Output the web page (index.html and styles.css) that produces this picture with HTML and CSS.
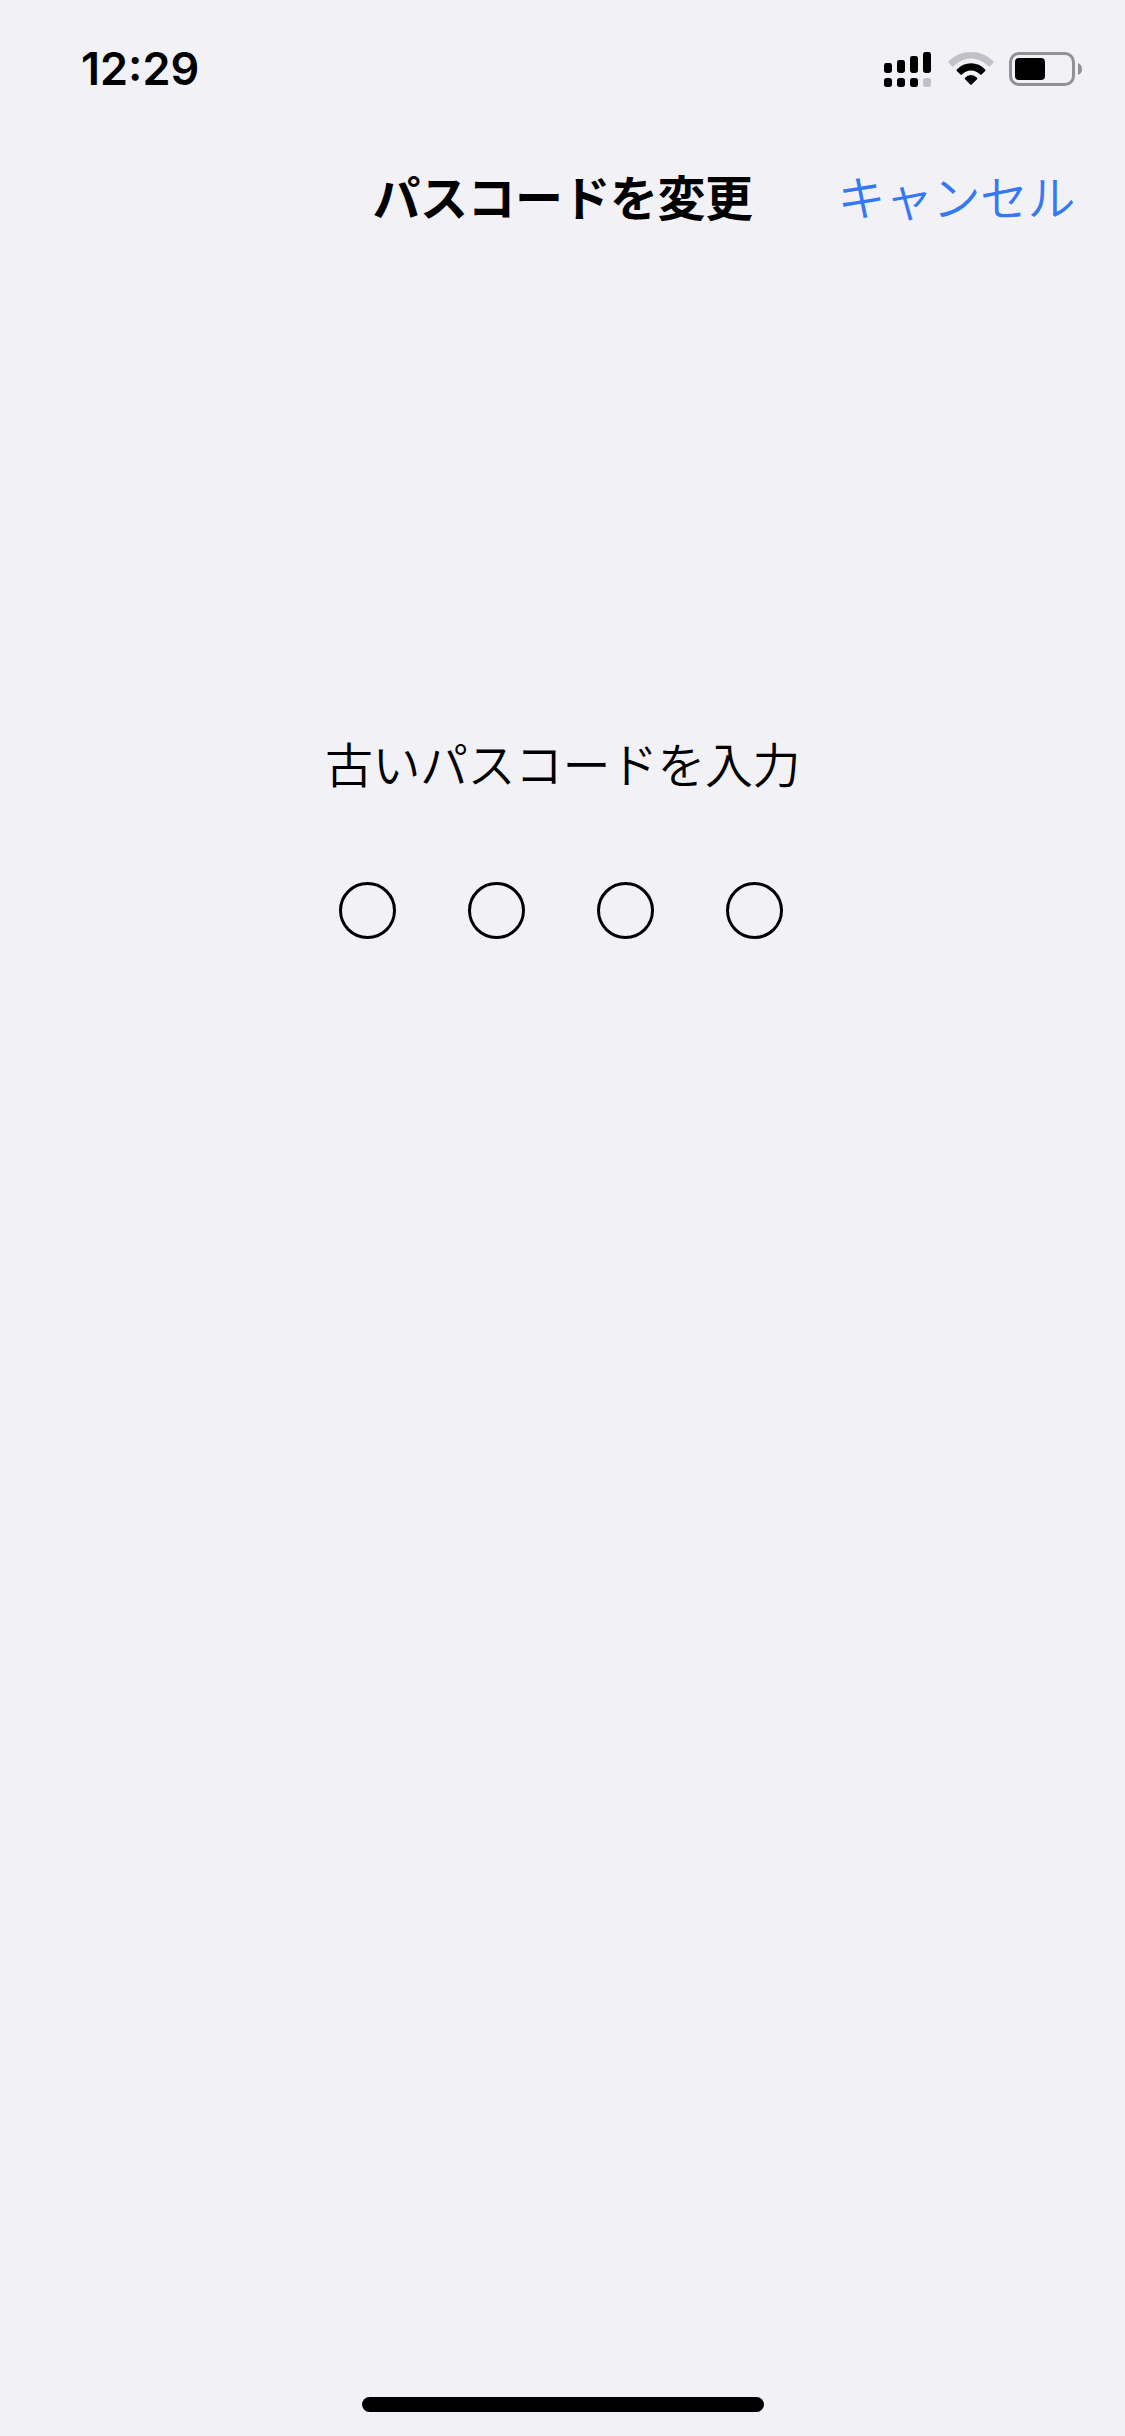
FILE: index.html
```html
<!DOCTYPE html>
<html lang="ja">
<head>
<meta charset="utf-8">
<title>パスコードを変更</title>
<link rel="stylesheet" href="styles.css">
</head>
<body>
<div class="screen">
  <header class="status-bar">
    <time class="clock">12:29</time>
    <div class="status-icons">
      <svg class="signal" width="47" height="35" viewBox="0 0 47 35">
        <rect x="0" y="11" width="8" height="10" rx="2.4"/>
        <rect x="13" y="8" width="8" height="13" rx="2.4"/>
        <rect x="26" y="4" width="8" height="17" rx="2.4"/>
        <rect x="39" y="0" width="8" height="21" rx="2.4"/>
        <rect x="0" y="26" width="8" height="9" rx="2.7"/>
        <rect x="13" y="26" width="8" height="9" rx="2.7"/>
        <rect x="26" y="26" width="8" height="9" rx="2.7"/>
        <rect class="dim" x="39" y="26" width="8" height="9" rx="2.7"/>
      </svg>
      <svg class="wifi" width="46" height="35" viewBox="0 0 46 35">
        <path class="dim" d="M.5 9.200Q10 0 23 0T45.500 9.200Q46 9.900 45.500 10.500L41.800 14.200Q41.100 14.800 40.400 14.200Q32.500 6.500 23 6.500T5.600 14.200Q4.900 14.800 4.200 14.200L.5 10.500Q0 9.900 .5 9.200Z"/>
        <path d="M8.800 17.600Q14.800 11.300 23 11.300T37.200 17.600Q37.700 18.300 37.200 18.900L33.500 22.500Q32.800 23.100 32.100 22.500Q28 18.500 23 18.500T13.900 22.500Q13.200 23.100 12.500 22.500L8.800 18.900Q8.300 18.300 8.800 17.600Z"/>
        <path d="M17 25.800Q19.500 23 23 23T29 25.800Q29.700 26.500 29 27.200L23.700 32.600Q23 33.300 22.300 32.600L17 27.200Q16.300 26.500 17 25.800Z"/>
      </svg>
      <svg class="battery" width="73" height="35" viewBox="0 0 73 35">
        <rect class="case" x="1.500" y="1.500" width="63" height="31" rx="8.500"/>
        <rect x="6" y="6" width="30" height="22" rx="4"/>
        <path class="tip" d="M69 11C74.300 12.500 74.300 21.500 69 23Z"/>
      </svg>
    </div>
  </header>
  <nav class="nav-bar">
    <h1 class="title">パスコードを変更</h1>
    <a class="cancel">キャンセル</a>
  </nav>
  <main class="passcode">
    <p class="prompt">古いパスコードを入力</p>
    <div class="digits">
      <span class="digit"></span>
      <span class="digit"></span>
      <span class="digit"></span>
      <span class="digit"></span>
    </div>
  </main>
  <footer class="home-area"><div class="home-indicator"></div></footer>
</div>
</body>
</html>
```
FILE: styles.css
```css
body {
  margin: 0;
  background: #f2f1f6;
  color: #000;
  font-family: "Noto Sans CJK JP", sans-serif;
}

.screen {
  display: flex;
  flex-direction: column;
  width: 1125px;
  height: 2436px;
}

.status-bar {
  box-sizing: border-box;
  display: flex;
  justify-content: space-between;
  align-items: flex-start;
  height: 132px;
  padding: 52px 43px 0 81px;
}

.clock {
  font: 600 45px/34px Inter, sans-serif;
}

.status-icons {
  display: flex;
}

.status-icons svg {
  display: block;
}

.wifi {
  margin: 0 15px 0 17px;
}

.dim {
  fill: #c2c1c7;
}

.case {
  fill: none;
  stroke: #929195;
  stroke-width: 3;
}

.tip {
  fill: #929195;
}

.nav-bar {
  display: grid;
  grid-template-columns: 1fr auto 1fr;
  align-items: center;
  height: 126px;
  padding: 0 50px;
  font-size: 48px;
  line-height: 72px;
  letter-spacing: -0.5px;
  white-space: nowrap;
}

.title {
  grid-column: 2;
  margin: 0;
  font-size: 48px;
  font-weight: 700;
}

.cancel {
  justify-self: end;
  color: #3478f6;
  font-weight: 350;
}

.passcode {
  display: flex;
  flex: 1;
  flex-direction: column;
  align-items: center;
  padding-top: 468px;
}

.prompt {
  margin: 0;
  font-size: 48px;
  font-weight: 350;
  line-height: 72px;
  letter-spacing: -0.5px;
}

.digits {
  display: flex;
  gap: 72px;
  margin-top: 84px;
  padding-right: 3px;
}

.digit {
  box-sizing: border-box;
  width: 57px;
  height: 57px;
  border: 3px solid #000;
  border-radius: 50%;
}

.home-area {
  display: flex;
  justify-content: center;
  padding-bottom: 24px;
}

.home-indicator {
  width: 402px;
  height: 15px;
  border-radius: 8px;
  background: #000;
}
```
